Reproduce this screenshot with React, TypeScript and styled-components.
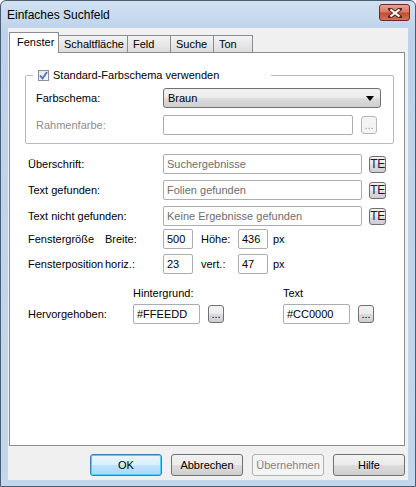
import React from "react";
import styled, { createGlobalStyle, css } from "styled-components";

const Global = createGlobalStyle`
  html, body { margin: 0; padding: 0; background: #fff; }
  body { font-family: "Liberation Sans", Arial, sans-serif; font-size: 11px; color: #000; }
`;

const Frame = styled.div`
  width: 416px;
  height: 487px;
  box-sizing: border-box;
  border: 1px solid #4b5d73;
  border-radius: 6px 6px 0 0;
  background: linear-gradient(180deg, #d2e1f2 0%, #bcd2ea 30px, #c3d7ec 100%);
  display: flex;
  flex-direction: column;
  overflow: hidden;
`;

const TitleBar = styled.div`
  height: 27px;
  flex: none;
  display: flex;
  align-items: center;
  justify-content: space-between;
  padding: 0 5px 0 6px;
  font-size: 12px;
`;

const CloseButton = styled.div`
  width: 29px;
  height: 15px;
  border: 1px solid #6a2a22;
  border-radius: 3px;
  background: linear-gradient(180deg, #e8a493 0%, #d67a63 45%, #c24b33 55%, #d0735c 100%);
  display: flex;
  align-items: center;
  justify-content: center;
  margin-top: -4px;
`;

const Client = styled.div`
  flex: 1;
  margin: 0 7px 6px 7px;
  background: #f0f0f0;
  display: flex;
  flex-direction: column;
  padding: 4px 3px 0 1px;
`;

const TabRow = styled.div`
  display: flex;
  align-items: flex-end;
  height: 20px;
  position: relative;
  z-index: 1;
`;

const Tab = styled.div<{ $active?: boolean; $w: number }>`
  width: ${(p) => p.$w}px;
  box-sizing: border-box;
  height: 17px;
  border: 1px solid #898c95;
  border-bottom: none;
  margin-left: -1px;
  background: linear-gradient(180deg, #f3f3f3, #dcdcdc);
  padding-left: 5px;
  line-height: 16px;
  white-space: nowrap;
  ${(p) =>
    p.$active &&
    css`
      height: 21px;
      margin-left: 0;
      margin-bottom: -1px;
      background: #fff;
      padding-left: 7px;
      line-height: 18px;
    `}
`;

const Panel = styled.div`
  height: 394px;
  box-sizing: border-box;
  border: 1px solid #898c95;
  background: #fff;
  padding: 14px 0 0 18px;
  display: flex;
  flex-direction: column;
`;

const Group = styled.fieldset`
  margin: 0 0 0 -3px;
  width: 369px;
  height: 77px;
  box-sizing: border-box;
  border: 1px solid #b5b9c0;
  border-radius: 2px;
  padding: 3px 0 0 10px;
  display: grid;
  grid-template-columns: 127px 190px 8px 16px;
  grid-auto-rows: 24px;
  row-gap: 3px;
  align-content: start;
  align-items: center;
`;

const Legend = styled.legend`
  padding: 0 0 0 5px;
  margin-left: -3px;
  width: 238px;
  box-sizing: border-box;
  display: flex;
  align-items: center;
  gap: 4px;
  height: 16px;
`;

const Check = styled.span`
  width: 11px;
  height: 11px;
  box-sizing: border-box;
  border: 1px solid #8f8f8f;
  background: linear-gradient(135deg, #e4e4e4, #fafafa);
  display: flex;
  align-items: center;
  justify-content: center;
`;

const Label = styled.span<{ $disabled?: boolean }>`
  color: ${(p) => (p.$disabled ? "#8d8d8d" : "#000")};
  white-space: nowrap;
`;

const Select = styled.div`
  grid-column: 2 / 5;
  width: 218px;
  height: 20px;
  box-sizing: border-box;
  border: 1px solid #707070;
  border-radius: 3px;
  background: linear-gradient(180deg, #f2f2f2 0%, #ebebeb 50%, #dddddd 50%, #cfcfcf 100%);
  display: flex;
  align-items: center;
  justify-content: space-between;
  padding: 0 6px 0 4px;
`;

const Input = styled.div<{ $w: number; $muted?: boolean }>`
  width: ${(p) => p.$w}px;
  height: 20px;
  box-sizing: border-box;
  border: 1px solid #abadb3;
  border-radius: 2px;
  background: #fff;
  color: ${(p) => (p.$muted ? "#6d6d6d" : "#000")};
  display: flex;
  align-items: center;
  padding: 0 3px;
  white-space: nowrap;
`;

const SmallButton = styled.div<{ $disabled?: boolean; $w?: number }>`
  width: ${(p) => p.$w ?? 16}px;
  height: 18px;
  box-sizing: border-box;
  border: 1px solid ${(p) => (p.$disabled ? "#b6b6b6" : "#707070")};
  border-radius: 3px;
  background: ${(p) =>
    p.$disabled ? "#f4f4f4" : "linear-gradient(180deg, #f2f2f2 0%, #ebebeb 50%, #dddddd 50%, #cfcfcf 100%)"};
  color: ${(p) => (p.$disabled ? "#9a9a9a" : "#000")};
  display: flex;
  align-items: flex-end;
  justify-content: center;
  font-size: 11px;
  line-height: 12px;
  padding-bottom: 2px;
`;

const TeButton = styled(SmallButton)`
  width: 17px;
  height: 17px;
  align-items: center;
  padding: 0;
  font-size: 12px;
  letter-spacing: -0.5px;
  color: #2b0a3d;
`;

const FieldGrid = styled.div`
  margin-top: 10px;
  display: grid;
  grid-template-columns: 135px 199px 7px 17px;
  grid-auto-rows: 20px;
  row-gap: 6px;
  align-items: center;
`;

const SizeGrid = styled.div`
  margin-top: 3px;
  display: grid;
  grid-template-columns: 77px 58px 30px 8px 37px 30px 5px auto;
  grid-auto-rows: 20px;
  row-gap: 5px;
  align-items: center;
`;

const ColorGrid = styled.div`
  margin-top: 10px;
  display: grid;
  grid-template-columns: 105px 67px 8px 16px 59px 67px 8px 16px;
  grid-template-rows: 18px 20px;
  row-gap: 2px;
  align-items: center;
`;

const Footer = styled.div`
  display: flex;
  justify-content: flex-end;
  gap: 9px;
  padding-top: 8px;
`;

const DialogButton = styled.div<{ $default?: boolean; $disabled?: boolean }>`
  width: 72px;
  height: 22px;
  box-sizing: border-box;
  border: 1px solid #707070;
  border-radius: 3px;
  background: linear-gradient(180deg, #f2f2f2 0%, #ebebeb 50%, #dddddd 50%, #cfcfcf 100%);
  display: flex;
  align-items: center;
  justify-content: center;
  ${(p) =>
    p.$default &&
    css`
      border-color: #3c7fb1;
      box-shadow: inset 0 0 0 1px #48d1ff;
      background: linear-gradient(180deg, #eaf6fd 0%, #d9f0fc 50%, #bee6fd 50%, #a7d9f5 100%);
    `}
  ${(p) =>
    p.$disabled &&
    css`
      border-color: #adb2b5;
      background: #f4f4f4;
      color: #838383;
    `}
`;

const tabs = [
  { name: "Fenster", w: 50 },
  { name: "Schaltfläche", w: 70 },
  { name: "Feld", w: 44 },
  { name: "Suche", w: 44 },
  { name: "Ton", w: 40 },
];

const fields = [
  { label: "Überschrift:", value: "Suchergebnisse" },
  { label: "Text gefunden:", value: "Folien gefunden" },
  { label: "Text nicht gefunden:", value: "Keine Ergebnisse gefunden" },
];

export default function App() {
  return (
    <>
      <Global />
      <Frame>
        <TitleBar>
          <span>Einfaches Suchfeld</span>
          <CloseButton>
            <svg width="14" height="10" viewBox="0 0 14 10">
              <path d="M2 1 L12 9 M12 1 L2 9" stroke="#5a2a22" strokeWidth="4" strokeLinecap="square" />
              <path d="M2.5 1.5 L11.5 8.5 M11.5 1.5 L2.5 8.5" stroke="#fff" strokeWidth="2.2" />
            </svg>
          </CloseButton>
        </TitleBar>
        <Client>
          <TabRow>
            {tabs.map((t, i) => (
              <Tab key={t.name} $active={i === 0} $w={t.w}>
                {t.name}
              </Tab>
            ))}
          </TabRow>
          <Panel>
            <Group>
              <Legend>
                <Check>
                  <svg width="9" height="9" viewBox="0 0 9 9">
                    <path d="M1 4.5 L3.5 7.5 L8 1" stroke="#4a6fc6" strokeWidth="1.8" fill="none" />
                  </svg>
                </Check>
                <span>Standard-Farbschema verwenden</span>
              </Legend>
              <Label>Farbschema:</Label>
              <Select>
                <span>Braun</span>
                <svg width="8" height="5" viewBox="0 0 8 5">
                  <path d="M0 0 H8 L4 5 Z" fill="#000" />
                </svg>
              </Select>
              <Label $disabled>Rahmenfarbe:</Label>
              <Input $w={190} />
              <span />
              <SmallButton $disabled>...</SmallButton>
            </Group>
            <FieldGrid>
              {fields.map((f) => (
                <React.Fragment key={f.label}>
                  <Label>{f.label}</Label>
                  <Input $w={199} $muted>
                    {f.value}
                  </Input>
                  <span />
                  <TeButton>TE</TeButton>
                </React.Fragment>
              ))}
            </FieldGrid>
            <SizeGrid>
              <Label>Fenstergröße</Label>
              <Label>Breite:</Label>
              <Input $w={30}>500</Input>
              <span />
              <Label>Höhe:</Label>
              <Input $w={30}>436</Input>
              <span />
              <Label>px</Label>
              <Label>Fensterposition</Label>
              <Label>horiz.:</Label>
              <Input $w={30}>23</Input>
              <span />
              <Label>vert.:</Label>
              <Input $w={30}>47</Input>
              <span />
              <Label>px</Label>
            </SizeGrid>
            <ColorGrid>
              <span />
              <Label>Hintergrund:</Label>
              <span />
              <span />
              <span />
              <Label>Text</Label>
              <span />
              <span />
              <Label>Hervorgehoben:</Label>
              <Input $w={67}>#FFEEDD</Input>
              <span />
              <SmallButton>...</SmallButton>
              <span />
              <Input $w={67}>#CC0000</Input>
              <span />
              <SmallButton>...</SmallButton>
            </ColorGrid>
          </Panel>
          <Footer>
            <DialogButton $default>OK</DialogButton>
            <DialogButton>Abbrechen</DialogButton>
            <DialogButton $disabled>Übernehmen</DialogButton>
            <DialogButton>Hilfe</DialogButton>
          </Footer>
        </Client>
      </Frame>
    </>
  );
}
